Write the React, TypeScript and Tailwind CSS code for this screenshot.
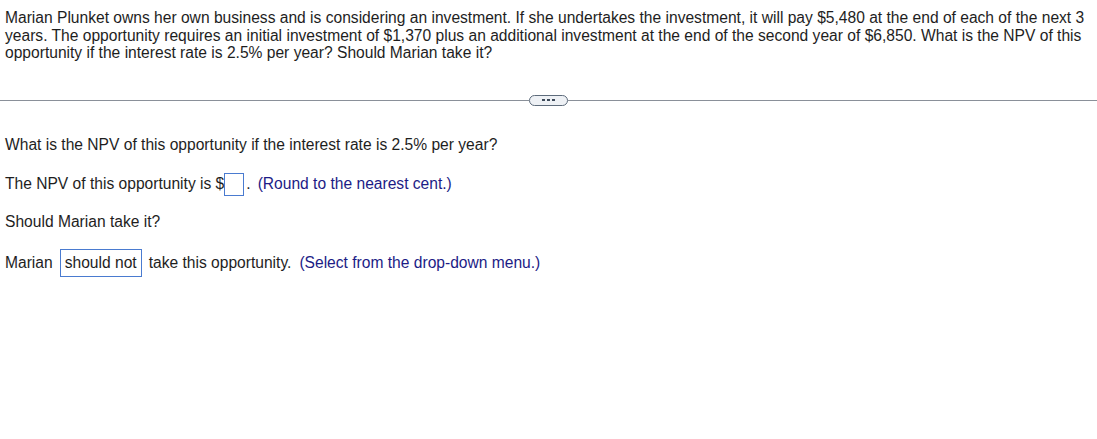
import React from 'react';

export default function App() {
  return (
    <div className="w-[1097px] h-[439px] bg-white text-[15.6px] text-[#1e1e1e] font-['Liberation_Sans',Arial,sans-serif] overflow-hidden">
      <p className="px-[5px] pt-[9px] leading-[17.5px] w-[1094px]">
        Marian Plunket owns her own business and is considering an investment. If she undertakes the investment, it will pay $5,480 at the end of each of the next 3
        years. The opportunity requires an initial investment of $1,370 plus an additional investment at the end of the second year of $6,850. What is the NPV of this
        opportunity if the interest rate is 2.5% per year? Should Marian take it?
      </p>

      <div className="mt-[33px] flex items-center">
        <div className="flex-1 h-px bg-[#8a9099]" />
        <button className="w-[39px] h-[11px] rounded-full border border-[#5d6b7b] bg-[#eef1f5] flex items-center justify-center gap-[2px]">
          <span className="w-[3px] h-[2px] bg-[#3d4a5a]" />
          <span className="w-[3px] h-[2px] bg-[#3d4a5a]" />
          <span className="w-[3px] h-[2px] bg-[#3d4a5a]" />
        </button>
        <div className="flex-1 h-px bg-[#8a9099]" />
      </div>

      <div className="px-[5px]">
        <p className="mt-[30px] leading-[18px]">What is the NPV of this opportunity if the interest rate is 2.5% per year?</p>

        <div className="mt-[19px] flex items-center h-[23px]">
          <span>The NPV of this opportunity is $</span>
          <span className="inline-block w-[20px] h-[23px] border border-[#4a7bd0] bg-white" />
          <span className="ml-[2px]">.</span>
          <span className="ml-[7px] text-[#1c1c86]">(Round to the nearest cent.)</span>
        </div>

        <p className="mt-[17px] leading-[18px]">Should Marian take it?</p>

        <div className="mt-[18px] flex items-center h-[28px]">
          <span>Marian</span>
          <span className="ml-[7px] h-[28px] px-[4px] flex items-center border border-[#4a7bd0]">should not</span>
          <span className="ml-[7px]">take this opportunity.</span>
          <span className="ml-[8px] text-[#1c1c86]">(Select from the drop-down menu.)</span>
        </div>
      </div>
    </div>
  );
}
